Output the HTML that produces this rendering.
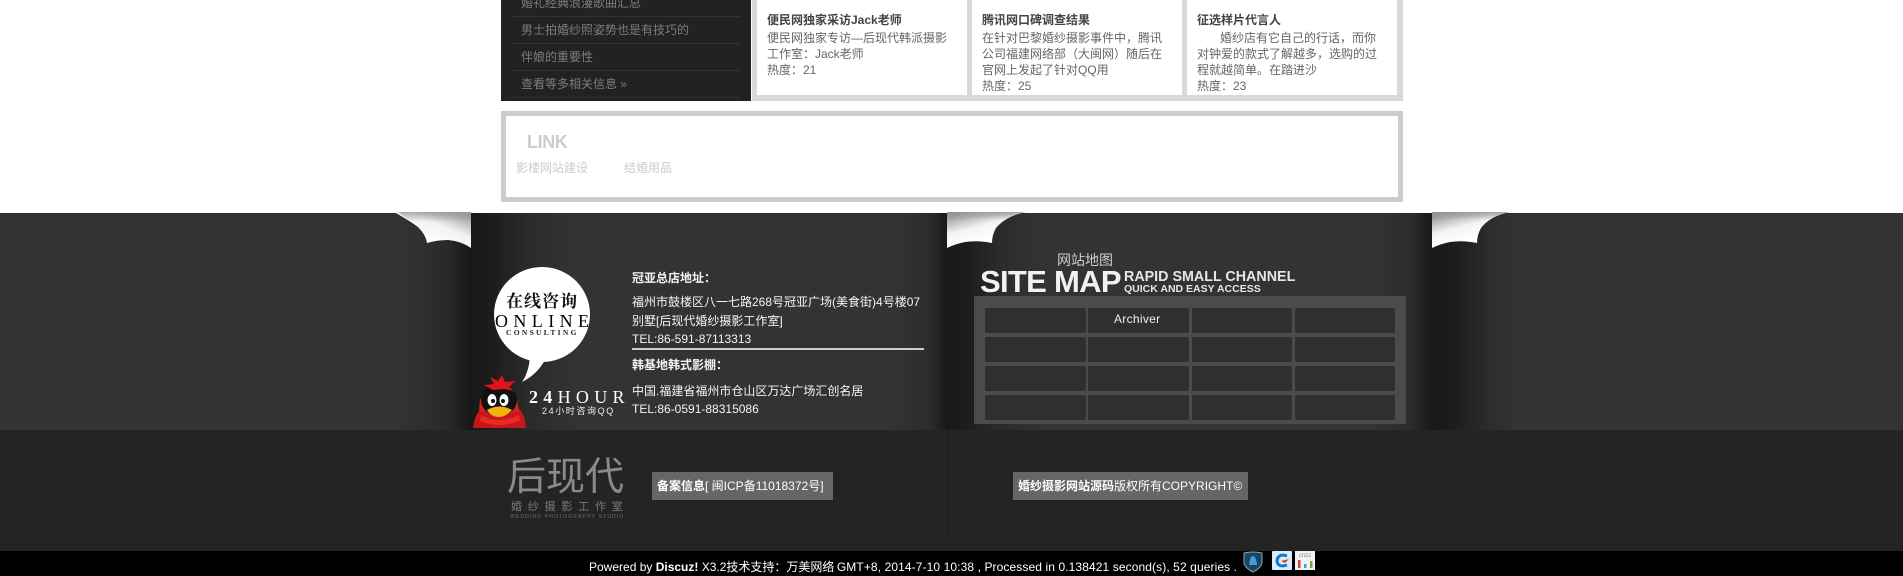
<!DOCTYPE html>
<html lang="zh">
<head>
<meta charset="utf-8">
<title>Footer</title>
<style>
html,body{margin:0;padding:0;background:#fff;}
body{width:1903px;height:576px;position:relative;overflow:hidden;font-family:"Liberation Sans","Noto Sans CJK SC",sans-serif;font-size:12px;}
.a{position:absolute;white-space:nowrap;line-height:16px;}
.s{color:#7d7d7d;left:521px;}
.rule{position:absolute;left:511px;width:230px;height:1px;background:#333;}
.t{color:#444;font-weight:bold;}
.b{color:#666;}
.w{color:#f4f4f4;left:632px;}
.cell{position:absolute;background:#2f2f2f;border-radius:2px;}
</style>
</head>
<body>
<!-- top content -->
<div style="position:absolute;left:501px;top:0;width:250px;height:101px;background:#222;"></div>
<div style="position:absolute;left:752px;top:0;width:651px;height:101px;background:#d9d9d9;"></div>
<div style="position:absolute;left:757px;top:0;width:210px;height:95px;background:#fff;"></div>
<div style="position:absolute;left:972px;top:0;width:210px;height:95px;background:#fff;"></div>
<div style="position:absolute;left:1187px;top:0;width:210px;height:95px;background:#fff;"></div>

<div class="a s" style="top:-5px;">婚礼经典浪漫歌曲汇总</div>
<div class="rule" style="top:16px;"></div>
<div class="a s" style="top:22px;">男士拍婚纱照姿势也是有技巧的</div>
<div class="rule" style="top:43px;"></div>
<div class="a s" style="top:49px;">伴娘的重要性</div>
<div class="rule" style="top:70px;"></div>
<div class="a s" style="top:76px;">查看等多相关信息 »</div>
<div class="rule" style="top:97px;"></div>

<div class="a t" style="left:767px;top:12px;">便民网独家采访Jack老师</div>
<div class="a b" style="left:767px;top:30px;">便民网独家专访—后现代韩派摄影</div>
<div class="a b" style="left:767px;top:46px;">工作室：Jack老师</div>
<div class="a b" style="left:767px;top:62px;">热度：21</div>

<div class="a t" style="left:982px;top:12px;">腾讯网口碑调查结果</div>
<div class="a b" style="left:982px;top:30px;">在针对巴黎婚纱摄影事件中，腾讯</div>
<div class="a b" style="left:982px;top:46px;">公司福建网络部（大闽网）随后在</div>
<div class="a b" style="left:982px;top:62px;">官网上发起了针对QQ用</div>
<div class="a b" style="left:982px;top:78px;">热度：25</div>

<div class="a t" style="left:1197px;top:12px;">征选样片代言人</div>
<div class="a b" style="left:1220px;top:30px;">婚纱店有它自己的行话，而你</div>
<div class="a b" style="left:1197px;top:46px;">对钟爱的款式了解越多，选购的过</div>
<div class="a b" style="left:1197px;top:62px;">程就越简单。在踏进沙</div>
<div class="a b" style="left:1197px;top:78px;">热度：23</div>

<!-- link box -->
<div style="position:absolute;left:501px;top:111px;width:892px;height:81px;border:5px solid #ccc;background:#fff;"></div>
<div class="a" style="left:527px;top:131px;line-height:22px;font-size:18px;font-weight:bold;color:#ccc;letter-spacing:-.4px;">LINK</div>
<div class="a" style="left:516px;top:160px;color:#ccc;">影楼网站建设</div>
<div class="a" style="left:624px;top:160px;color:#ccc;">结婚用品</div>

<!-- footer main -->
<div style="position:absolute;left:0;top:213px;width:1903px;height:217px;background:linear-gradient(90deg,#333 0,#333 400px,#2a2a2a 445px,#181818 471px,#1c1c1c 490px,#2b2b2b 530px,#333 575px,#333 890px,#2c2c2c 930px,#191919 947px,#1c1c1c 965px,#2b2b2b 1000px,#333 1040px,#333 1375px,#2b2b2b 1412px,#181818 1432px,#1d1d1d 1455px,#2c2c2c 1490px,#333 1515px,#333 1903px);"></div>
<svg style="position:absolute;left:0;top:0;" width="1903" height="260" viewBox="0 0 1903 260">
<defs>
<linearGradient id="c1" x1="1" y1="0" x2="0.35" y2="0.75"><stop offset="0" stop-color="#8c8c8c"/><stop offset=".55" stop-color="#f2f2f2"/><stop offset="1" stop-color="#fff"/></linearGradient>
<linearGradient id="c2" x1="0" y1="0" x2="0.45" y2="0.8"><stop offset="0" stop-color="#808080"/><stop offset=".6" stop-color="#f4f4f4"/><stop offset="1" stop-color="#fff"/></linearGradient>
<linearGradient id="c3" x1="0" y1="0" x2="0" y2="1"><stop offset="0" stop-color="#999" stop-opacity=".8"/><stop offset="1" stop-color="#999" stop-opacity="0"/></linearGradient>
</defs>
<path d="M394 212 L471 212 L471 248 Q461 241 448 240 Q437 240 427 243 Q426 235 418 227 Q407 219 394 212 Z" fill="url(#c1)"/>
<path d="M398 212 L471 212 L471 222 L412 222 Z" fill="url(#c3)"/>
<path d="M947 212 L1026 212 Q1006 216 996 228 Q992 235 992 243 Q978 240 965 242 Q955 244 947 248 Z" fill="url(#c2)"/>
<path d="M947 212 L1026 212 Q1014 214 1006 220 L947 220 Z" fill="url(#c3)"/>
<path d="M1432 212 L1510 212 Q1490 216 1481 228 Q1477 235 1477 243 Q1463 240 1450 242 Q1440 244 1432 248 Z" fill="url(#c2)"/>
<path d="M1432 212 L1510 212 Q1498 214 1490 220 L1432 220 Z" fill="url(#c3)"/>
</svg>

<!-- bubble -->
<svg style="position:absolute;left:470px;top:260px;" width="165" height="172" viewBox="0 0 165 172">
<ellipse cx="72" cy="54.500" rx="48" ry="47.500" fill="#fff"/>
<path d="M60 96 Q59 112 52 122 Q68 114 76 98 Z" fill="#fff"/>
<g transform="translate(3,115)">
<path d="M0 53 Q2 36 12 32 L44 32 Q52 38 53 53 Z" fill="#c8161d"/>
<path d="M7 24 L44 24 L46 36 Q28 44 6 36 Z" fill="#d81e1e"/>
<ellipse cx="26" cy="25" rx="18" ry="16" fill="#111"/>
<path d="M11 10 L21 9 L17 2 L25 6 L29 0 L32 7 L42 6 L36 12 L41 16 L31 14 L20 15 Z" fill="#e0141b"/>
<ellipse cx="19" cy="25" rx="4.500" ry="6" fill="#fff"/>
<ellipse cx="31" cy="25" rx="4.500" ry="6" fill="#fff"/>
<circle cx="20" cy="26" r="2" fill="#111"/>
<circle cx="30" cy="26" r="2" fill="#111"/>
<path d="M14 35 Q26 28 39 35 Q33 42 26 42 Q18 42 14 35 Z" fill="#f5b110"/>
<path d="M8 40 Q26 50 46 40 L47 46 Q26 54 7 46 Z" fill="#e82a22"/>
</g>
</svg>
<div class="a" style="left:506px;top:291px;line-height:22px;font-family:'Liberation Serif','Noto Serif CJK SC',serif;font-weight:bold;font-size:17px;color:#111;letter-spacing:1px;">在线咨询</div>
<div class="a" style="left:495px;top:312px;line-height:18px;font-family:'Liberation Serif',serif;font-size:18px;color:#000;letter-spacing:5.400px;">ONLINE</div>
<div class="a" style="left:506px;top:328px;line-height:10px;font-family:'Liberation Serif',serif;font-weight:bold;font-size:7.500px;color:#222;letter-spacing:2.300px;">CONSULTING</div>
<div class="a" style="left:529px;top:388px;line-height:18px;font-family:'Liberation Serif',serif;font-size:18px;color:#fff;letter-spacing:5.300px;"><b>24</b>HOUR</div>
<div class="a" style="left:542px;top:405px;line-height:12px;font-size:9px;color:#eee;letter-spacing:1.600px;">24小时咨询QQ</div>

<!-- addresses -->
<div class="a w" style="top:270px;font-weight:bold;">冠亚总店地址：</div>
<div class="a w" style="top:294px;">福州市鼓楼区八一七路268号冠亚广场(美食街)4号楼07</div>
<div class="a w" style="top:313px;">别墅[后现代婚纱摄影工作室]</div>
<div class="a w" style="top:331px;">TEL:86-591-87113313</div>
<div style="position:absolute;left:632px;top:348px;width:292px;height:2px;background:#ccc;"></div>
<div class="a w" style="top:357px;font-weight:bold;">韩基地韩式影棚：</div>
<div class="a w" style="top:383px;">中国.福建省福州市仓山区万达广场汇创名居</div>
<div class="a w" style="top:401px;">TEL:86-0591-88315086</div>

<!-- site map -->
<div class="a" style="left:1057px;top:252px;font-size:14px;color:#ccc;">网站地图</div>
<div class="a" style="left:980px;top:266px;line-height:32px;font-size:31px;font-weight:bold;color:#f2f2f2;letter-spacing:-.7px;">SITE MAP</div>
<div class="a" style="left:1124px;top:269px;font-size:14.300px;font-weight:bold;color:#e6e6e6;">RAPID SMALL CHANNEL</div>
<div class="a" style="left:1124px;top:281px;font-size:10.500px;font-weight:bold;color:#e6e6e6;">QUICK AND EASY ACCESS</div>
<div style="position:absolute;left:974px;top:296px;width:432px;height:128px;background:#4b4b4b;"></div>
<div class="cell" style="left:985px;top:308px;width:101px;height:25px;"></div>
<div class="cell" style="left:1088px;top:308px;width:101px;height:25px;"></div>
<div class="cell" style="left:1192px;top:308px;width:100px;height:25px;"></div>
<div class="cell" style="left:1295px;top:308px;width:100px;height:25px;"></div>
<div class="cell" style="left:985px;top:337px;width:101px;height:25px;"></div>
<div class="cell" style="left:1088px;top:337px;width:101px;height:25px;"></div>
<div class="cell" style="left:1192px;top:337px;width:100px;height:25px;"></div>
<div class="cell" style="left:1295px;top:337px;width:100px;height:25px;"></div>
<div class="cell" style="left:985px;top:366px;width:101px;height:25px;"></div>
<div class="cell" style="left:1088px;top:366px;width:101px;height:25px;"></div>
<div class="cell" style="left:1192px;top:366px;width:100px;height:25px;"></div>
<div class="cell" style="left:1295px;top:366px;width:100px;height:25px;"></div>
<div class="cell" style="left:985px;top:395px;width:101px;height:25px;"></div>
<div class="cell" style="left:1088px;top:395px;width:101px;height:25px;"></div>
<div class="cell" style="left:1192px;top:395px;width:100px;height:25px;"></div>
<div class="cell" style="left:1295px;top:395px;width:100px;height:25px;"></div>
<div class="a" style="left:1114px;top:311px;color:#f0f0f0;letter-spacing:.3px;">Archiver</div>

<!-- lower bar -->
<div style="position:absolute;left:0;top:430px;width:1903px;height:121px;background:#242424;"></div>
<div style="position:absolute;left:947px;top:430px;width:1px;height:105px;background:#1d1d1d;"></div>
<div class="a" style="left:507px;top:456px;line-height:44px;font-size:39px;color:#8a8a8a;">后现代</div>
<div class="a" style="left:511px;top:501px;line-height:12px;font-size:11px;color:#7a7a7a;letter-spacing:5.800px;">婚纱摄影工作室</div>
<div class="a" style="left:510px;top:514px;line-height:7px;font-size:5px;color:#6d6d6d;letter-spacing:1.150px;">WEDDING PHOTOGRAPHY STUDIO</div>
<div style="position:absolute;left:652px;top:472px;width:181px;height:28px;background:#666;"></div>
<div class="a" style="left:657px;top:478px;color:#fff;"><b>备案信息</b>[ 闽ICP备11018372号]</div>
<div style="position:absolute;left:1013px;top:472px;width:235px;height:28px;background:#666;"></div>
<div class="a" style="left:1018px;top:478px;color:#fff;"><b>婚纱摄影网站源码</b>版权所有COPYRIGHT©</div>

<!-- bottom black bar -->
<div style="position:absolute;left:0;top:551px;width:1903px;height:25px;background:#000;"></div>
<div class="a" style="left:589px;top:559px;color:#fff;">Powered by <b>Discuz!</b> X3.2技术支持：万美网络<span style="letter-spacing:.1px;margin-left:-1px;"> GMT+8, 2014-7-10 10:38 , Processed in 0.138421 second(s), 52 queries .</span></div>
<svg style="position:absolute;left:1240px;top:550px;" width="80" height="24" viewBox="0 0 80 24">
<path d="M4 3 Q13 1 22 3 L22 13 Q21 18 13 22 Q5 18 4 13 Z" fill="#1c4460" stroke="#8aa" stroke-width="1"/>
<path d="M9 15 Q10 6 13 6 Q16 6 17 15 Z" fill="#3f9ed6"/>
<rect x="32" y="1" width="20" height="19" rx="1" fill="#d8ecfa"/>
<path d="M47 6 Q38 3 37 11 Q38 18 47 15" fill="none" stroke="#1677c4" stroke-width="3"/>
<path d="M41 11 L49 9 L45 13 Z" fill="#e03a2e"/>
<rect x="55" y="1" width="20" height="19" fill="#f2f2f2"/>
<text x="65" y="7" font-size="6" text-anchor="middle" fill="#888" font-family="Liberation Sans, sans-serif">cnzz</text>
<rect x="58" y="10" width="2.500" height="8" fill="#e0393e"/>
<rect x="64" y="14" width="2.500" height="4" fill="#3fa0d8"/>
<rect x="70" y="11" width="2.500" height="7" fill="#7aa82a"/>
</svg>
</body>
</html>
